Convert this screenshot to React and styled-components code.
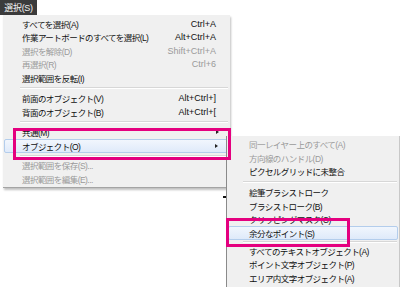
import React from "react";
import styled, { createGlobalStyle } from "styled-components";

const Global = createGlobalStyle`
  html, body {
    margin: 0;
    padding: 0;
    background: #ffffff;
  }
  body {
    width: 400px;
    height: 287px;
    overflow: hidden;
    font-family: "Liberation Sans", "Noto Sans CJK JP", sans-serif;
  }
`;

const Page = styled.div`
  display: flex;
  flex-direction: column;
  width: 400px;
  height: 287px;
`;

const MenuTitle = styled.div`
  width: 37px;
  height: 15px;
  background: #3b3b3b;
  color: #f2f2f2;
  font-size: 9px;
  letter-spacing: -0.3px;
  display: flex;
  align-items: center;
  justify-content: center;
`;

const Stage = styled.div`
  position: relative;
  flex: 1;
`;

const Menu = styled.div`
  margin-left: 3px;
  width: 227px;
  padding: 2px 0 1px;
  background: #f0f0f0;
  border-bottom: 1px solid #a4a4a4;
  box-shadow: 1px 2px 2px rgba(0, 0, 0, 0.25);
  display: flex;
  flex-direction: column;
`;

const SubMenu = styled.div`
  position: absolute;
  left: 226px;
  top: 121px;
  width: 172px;
  height: 160px;
  padding-top: 1px;
  background: #f0f0f0;
  border-left: 1px solid #8a8a8a;
  border-right: 1px solid #c8c8c8;
  display: flex;
  flex-direction: column;
`;

const Row = styled.div`
  height: ${({ $h }) => $h || 13.5}px;
  box-sizing: border-box;
  display: flex;
  align-items: center;
  justify-content: space-between;
  padding: 0 13px 0 ${({ $pad }) => $pad || 18}px;
  margin: 0 ${({ $m }) => $m || 0}px;
  font-size: 8.5px;
  letter-spacing: -0.55px;
  color: ${({ $disabled }) => ($disabled ? "#9a9a9a" : "#0f0f0f")};
  border: 1px solid ${({ $active }) => ($active ? "#b3cdec" : "transparent")};
  border-radius: 2px;
  background: ${({ $active }) =>
    $active ? "linear-gradient(#f1f6fd, #dfeafa)" : "transparent"};
  white-space: nowrap;
`;

const Shortcut = styled.span`
  font-family: "Liberation Sans", sans-serif;
  font-size: 9px;
  letter-spacing: 0;
`;

const Arrow = styled.span`
  width: 0;
  height: 0;
  margin-right: -3px;
  border-top: 2.5px solid transparent;
  border-bottom: 2.5px solid transparent;
  border-left: 3px solid #222;
`;

const Separator = styled.div`
  height: ${({ $h }) => $h || 7}px;
  display: flex;
  align-items: center;
  padding-left: ${({ $indent }) => $indent || 17}px;
  padding-right: 2px;
  &::after {
    content: "";
    flex: 1;
    height: 1px;
    background: #d7d7d7;
    border-bottom: 1px solid #ffffff;
  }
`;

const Callout = styled.div`
  position: absolute;
  left: ${({ $x }) => $x}px;
  top: ${({ $y }) => $y}px;
  width: ${({ $w }) => $w}px;
  height: ${({ $h }) => $h}px;
  box-sizing: border-box;
  border: 3px solid #e4007f;
`;

const Speck = styled.div`
  position: absolute;
  left: 223px;
  top: 181px;
  width: 3px;
  height: 2px;
  background: #111;
`;

const mainGroups = [
  [
    ["すべてを選択(A)", "Ctrl+A"],
    ["作業アートボードのすべてを選択(L)", "Alt+Ctrl+A"],
    ["選択を解除(D)", "Shift+Ctrl+A", true],
    ["再選択(R)", "Ctrl+6", true],
    ["選択範囲を反転(I)", ""],
  ],
  [
    ["前面のオブジェクト(V)", "Alt+Ctrl+]"],
    ["背面のオブジェクト(B)", "Alt+Ctrl+["],
  ],
];

const subGroups = [
  [
    ["同一レイヤー上のすべて(A)", true],
    ["方向線のハンドル(D)", true],
    ["ピクセルグリッドに未整合", false],
  ],
  [
    ["絵筆ブラシストローク", false],
    ["ブラシストローク(B)", false],
    ["クリッピングマスク(C)", false],
    ["余分なポイント(S)", false, true],
  ],
  [
    ["すべてのテキストオブジェクト(A)", false],
    ["ポイント文字オブジェクト(P)", false],
    ["エリア内文字オブジェクト(A)", false],
  ],
];

const App = () => {
  return (
    <Page>
      <Global />
      <MenuTitle>選択(S)</MenuTitle>
      <Stage>
        <Menu>
          {mainGroups.map((group, gi) => (
            <React.Fragment key={gi}>
              {group.map(([label, key, off]) => (
                <Row key={label} $disabled={off}>
                  <span>{label}</span>
                  <Shortcut>{key}</Shortcut>
                </Row>
              ))}
              <Separator />
            </React.Fragment>
          ))}
          <Row>
            <span>共通(M)</span>
            <Arrow />
          </Row>
          <Row $active $m={1} $pad={17}>
            <span>オブジェクト(O)</span>
            <Arrow />
          </Row>
          <Separator $h={6} />
          <Row $disabled>
            <span>選択範囲を保存(S)...</span>
          </Row>
          <Row $disabled>
            <span>選択範囲を編集(E)...</span>
          </Row>
        </Menu>

        <SubMenu>
          {subGroups.map((group, gi) => (
            <React.Fragment key={gi}>
              {gi > 0 && <Separator $indent={16} $h={gi === 1 ? 7 : 4} />}
              {group.map(([label, off, active]) => (
                <Row
                  key={label}
                  $h={13.7}
                  $pad={active ? 20 : 21}
                  $m={active ? 1 : 0}
                  $disabled={off}
                  $active={active}
                >
                  <span>{label}</span>
                </Row>
              ))}
            </React.Fragment>
          ))}
        </SubMenu>

        <Speck />
        <Callout $x={13} $y={113} $w={218} $h={32} />
        <Callout $x={226} $y={203} $w={124} $h={29} />
      </Stage>
    </Page>
  );
};

export default App;
